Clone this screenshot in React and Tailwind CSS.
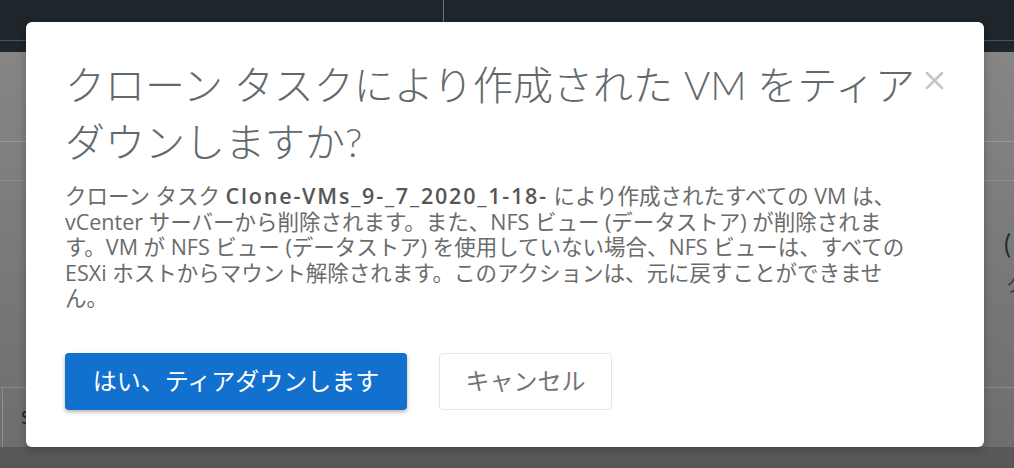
import React from "react";

const jp = { fontFamily: '"Lato", "Noto Sans CJK JP", sans-serif' };
const body = { fontFamily: '"Open Sans", "Noto Sans CJK JP", sans-serif' };

export default function App() {
  return (
    <div className="relative w-[1014px] h-[468px] overflow-hidden bg-[#7a7a7a]" style={jp}>
      {/* background page (dimmed) */}
      <div className="flex flex-col h-full">
        <div className="relative h-[52px] bg-[#1e252b] shrink-0">
          <div className="absolute left-0 right-0 top-[40px] h-px bg-[#4d545a]" />
          <div className="absolute left-[443px] top-0 h-[22px] w-px bg-[#6b7177]" />
        </div>
        <div className="flex-1 flex flex-col bg-gradient-to-b from-[#868686] to-[#6e6e6e]">
          <div className="h-[90px] border-b border-[#9a9a9a]" />
          <div className="h-[39px] border-b border-[#8e8e8e]" />
          <div className="flex-1 relative">
            <div className="absolute left-[1004px] top-[48px] text-[26px] leading-[30px] text-[#2b2b2b]">(</div>
            <div className="absolute left-[1006px] top-[94px] text-[18px] leading-[20px] text-[#3a3a3a]">ク</div>
          </div>
          <div className="h-[60px] border-t border-[#8a8a8a] flex">
            <div className="w-[3px] border-r border-[#8f8f8f]" />
            <div className="pl-[18px] pt-[16px] text-[18px] text-[#222]">S</div>
          </div>
        </div>
        <div className="h-[21px] bg-[#585858] shrink-0" />
      </div>

      {/* modal */}
      <div className="absolute left-[26px] top-[22px] w-[958px] h-[425px] bg-white rounded-[6px] shadow-[0_2px_10px_rgba(0,0,0,0.25)] px-[39px] pt-[35px]">
        <button className="absolute right-[40px] top-[48px] w-[20px] h-[20px] flex items-center justify-center">
          <svg width="19" height="19" viewBox="0 0 19 19">
            <path d="M2 2 L17 17 M17 2 L2 17" stroke="#c6c6c6" strokeWidth="2.6" strokeLinecap="round" />
          </svg>
        </button>
        <h1 className="text-[40px] leading-[57px] font-light text-[#62696e] whitespace-nowrap">
          クローン タスクにより作成された VM をティア<br />ダウンしますか?
        </h1>
        <p className="mt-[12px] text-[21.5px] leading-[25.5px] text-[#6b6b6b] whitespace-nowrap" style={body}>
          クローン タスク <span className="font-semibold text-[#565656] tracking-[1.8px]">Clone-VMs_9-_7_2020_1-18-</span> により作成されたすべての VM は、<br />
          vCenter サーバーから削除されます。また、NFS ビュー (データストア) が削除されま<br />
          す。VM が NFS ビュー (データストア) を使用していない場合、NFS ビューは、すべての<br />
          ESXi ホストからマウント解除されます。このアクションは、元に戻すことができませ<br />
          ん。
        </p>
        <div className="mt-[42px] flex gap-[32px]">
          <button className="w-[342px] h-[57px] rounded-[4px] bg-[#1270cf] text-white text-[24px] shadow-[0_2px_4px_rgba(0,0,0,0.3)] flex items-center justify-center">
            はい、ティアダウンします
          </button>
          <button className="w-[173px] h-[57px] rounded-[4px] bg-white border border-[#e6e6e6] text-[#747474] text-[24px] flex items-center justify-center">
            キャンセル
          </button>
        </div>
      </div>
    </div>
  );
}
